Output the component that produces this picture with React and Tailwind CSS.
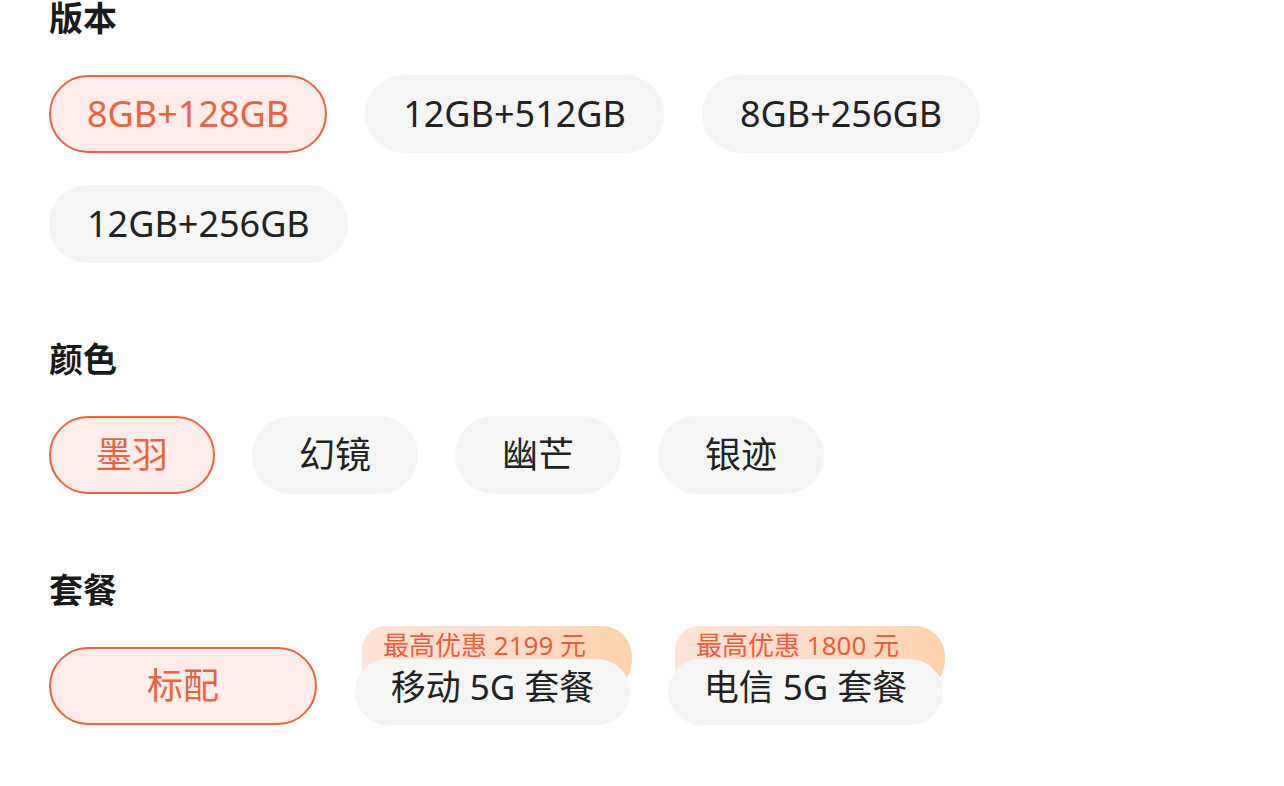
import { useState } from 'react'

const VERSIONS = ['8GB+128GB', '12GB+512GB', '8GB+256GB', '12GB+256GB']
const COLORS = ['墨羽', '幻镜', '幽芒', '银迹']
const PLANS = [
  { name: '标配', width: 'w-[268px]' },
  { name: '移动 5G 套餐', width: 'w-[275px]', badge: '最高优惠 2199 元' },
  { name: '电信 5G 套餐', width: 'w-[275px]', badge: '最高优惠 1800 元' },
]

const font = { fontFamily: '"Noto Sans", "Noto Sans CJK SC", sans-serif' }

function Chip({ label, active, onClick, className = '' }) {
  return (
    <button
      onClick={onClick}
      className={`h-[78px] rounded-full border-[2.5px] text-[36px] leading-none flex items-center justify-center whitespace-nowrap ${
        active
          ? 'border-[#e8653f] bg-[#fdecea] text-[#e8653f]'
          : 'border-transparent bg-[#f5f5f5] text-[#222]'
      } ${className}`}
    >
      {label}
    </button>
  )
}

function PlanChip({ plan, active, onClick }) {
  if (!plan.badge) {
    return <Chip label={plan.name} active={active} onClick={onClick} className={plan.width} />
  }
  return (
    <button onClick={onClick} className={`relative h-[78px] ${plan.width}`}>
      {/* peach tag behind the chip */}
      <div className="absolute left-[7px] -right-[2px] -top-[21px] h-[68px] rounded-tl-[24px] rounded-tr-[30px] rounded-br-[34px] rounded-bl-[20px] bg-gradient-to-r from-[#fde3d8] via-[#fddccb] to-[#fcd2aa]" />
      <div
        className={`absolute inset-x-0 top-[12px] bottom-0 rounded-full ${
          active ? 'bg-[#fdecea] border-[2.5px] border-[#e8653f]' : 'bg-[#f5f5f5]'
        }`}
      />
      <span className="absolute left-[28px] -top-[18px] text-[26px] leading-[32px] text-[#ec5e3b] whitespace-nowrap">
        {plan.badge}
      </span>
      <span
        className={`relative h-full flex items-center justify-center text-[35px] leading-none whitespace-nowrap ${
          active ? 'text-[#e8653f]' : 'text-[#222]'
        }`}
      >
        {plan.name}
      </span>
    </button>
  )
}

function Section({ title, children, gap = 'gap-x-[38px]', className = '' }) {
  return (
    <div className={className}>
      <h2 className="text-[34px] leading-[40px] font-bold text-[#1a1a1a]">{title}</h2>
      <div className={`mt-[37px] flex flex-wrap gap-y-[32px] ${gap}`}>{children}</div>
    </div>
  )
}

export default function App() {
  const [version, setVersion] = useState(0)
  const [color, setColor] = useState(0)
  const [plan, setPlan] = useState(0)

  return (
    <div className="min-h-screen bg-white overflow-hidden" style={font}>
      <div className="pl-[49px] pr-[20px] -mt-[2px]">
        <Section title="版本">
          {VERSIONS.map((v, i) => (
            <Chip key={v} label={v} active={version === i} onClick={() => setVersion(i)} className="px-[36px]" />
          ))}
        </Section>

        <Section title="颜色" gap="gap-x-[37px]" className="mt-[76px]">
          {COLORS.map((c, i) => (
            <Chip key={c} label={c} active={color === i} onClick={() => setColor(i)} className="w-[166px]" />
          ))}
        </Section>

        <Section title="套餐" className="mt-[76px]">
          {PLANS.map((p, i) => (
            <PlanChip key={p.name} plan={p} active={plan === i} onClick={() => setPlan(i)} />
          ))}
        </Section>
      </div>
    </div>
  )
}
